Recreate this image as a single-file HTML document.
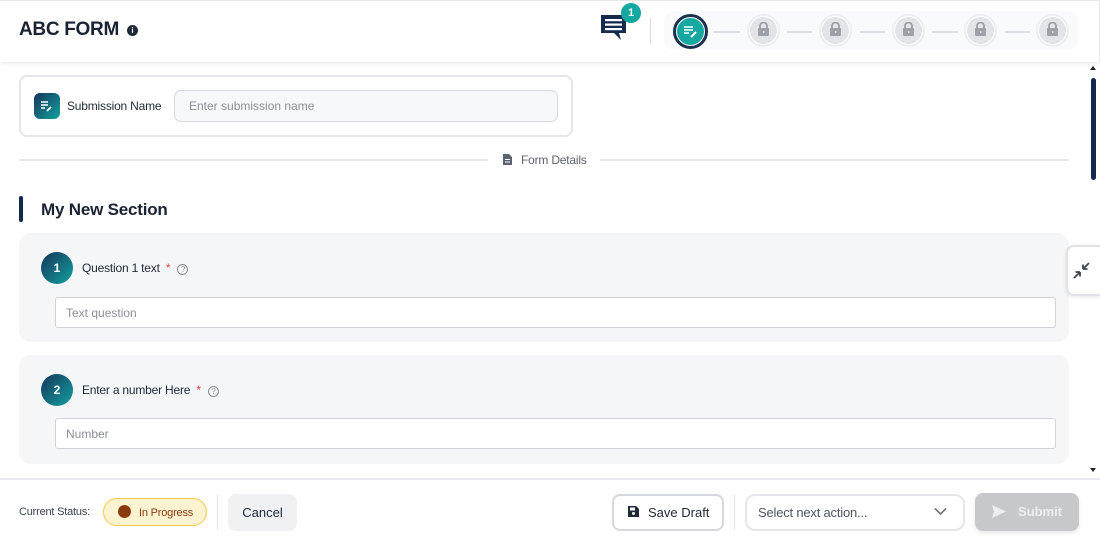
<!DOCTYPE html><html><head><style>
*{box-sizing:border-box;margin:0;padding:0}
body{width:1100px;height:542px;overflow:hidden;background:#fff;font-family:"Liberation Sans",sans-serif;position:relative;color:#1f2937}
.a{position:absolute}
</style></head><body>
<div class="a" style="left:0;top:0;width:1100px;height:62px;border-top:1px solid #e5e7eb;border-right:1px solid #e5e7eb;box-shadow:0 2px 4px rgba(0,0,0,.08)"></div>
<div class="a" style="left:19px;top:19px;font-size:19px;font-weight:bold;color:#1a2233;letter-spacing:-.3px">ABC FORM</div>
<div class="a" style="left:127px;top:25px;width:11px;height:11px;border-radius:50%;background:#1e2a3a;color:#fff;font-size:8px;font-weight:bold;text-align:center;line-height:11px">i</div>
<svg class="a" style="left:600px;top:14px" width="28" height="28" viewBox="0 0 28 28"><path d="M1 1h25v18H19l2 7-7-7H1z" fill="#152b4d"/><rect x="5" y="5" width="17" height="2.2" fill="#fff"/><rect x="5" y="9.5" width="17" height="2.2" fill="#fff"/><rect x="5" y="14" width="17" height="2.2" fill="#fff"/></svg>
<div class="a" style="left:621px;top:3px;width:20px;height:20px;border-radius:50%;background:#14a8a0;color:#fff;font-size:11px;font-weight:bold;text-align:center;line-height:20px">1</div>
<div class="a" style="left:650px;top:18px;width:1px;height:26px;background:#d8dbe0"></div>
<div class="a" style="left:664px;top:11px;width:414px;height:39px;border-radius:10px;background:#f9fafb"></div>
<div class="a" style="left:673px;top:14px;width:35px;height:35px;border-radius:50%;border:3px solid #1c3050;background:#fff"></div>
<div class="a" style="left:677px;top:18px;width:27px;height:27px;border-radius:50%;background:#14a8a0"></div>
<svg class="a" style="left:682px;top:23px" width="17" height="17" viewBox="0 0 17 17"><path d="M2 4h9M2 7h9M2 10h5" stroke="#fff" stroke-width="1.6"/><path d="M9 14l5-5" stroke="#fff" stroke-width="2"/></svg>
<div id="steps"></div>
<script>
var xs=[763,835,908,980,1052],h='';
xs.forEach(function(x,i){h+='<div class="a" style="left:'+(x-16)+'px;top:14px;width:33px;height:33px;border-radius:50%;border:2px solid #eceef1;background:#fff"></div><div class="a" style="left:'+(x-13)+'px;top:17px;width:27px;height:27px;border-radius:50%;background:#e2e4e8"></div><svg class="a" style="left:'+(x-6)+'px;top:22px" width="13" height="15" viewBox="0 0 13 15"><path d="M3 6V4a3.5 3.5 0 0 1 7 0v2" stroke="#9ca0a8" stroke-width="1.8" fill="none"/><rect x="1" y="6" width="11" height="8" rx="1" fill="#9ca0a8"/><rect x="6" y="9" width="1.4" height="2" fill="#e2e4e8"/></svg>';});
var ls=[[713,740],[787,812],[860,885],[932,958],[1005,1030]];
ls.forEach(function(l){h+='<div class="a" style="left:'+l[0]+'px;top:31px;width:'+(l[1]-l[0])+'px;height:1.5px;background:#dcdfe4"></div>'});
document.getElementById('steps').innerHTML=h;
</script>
<div class="a" style="left:1091px;top:78px;width:5px;height:102px;border-radius:3px;background:#13294b"></div>
<div class="a" style="left:1090px;top:66px;width:0;height:0;border-left:3px solid transparent;border-right:3px solid transparent;border-bottom:4px solid #222"></div>
<div class="a" style="left:1090px;top:468px;width:0;height:0;border-left:3px solid transparent;border-right:3px solid transparent;border-top:4px solid #222"></div>

<div class="a" style="left:19px;top:75px;width:554px;height:62px;border:2px solid #e4e6ea;border-radius:8px"></div>
<div class="a" style="left:34px;top:93px;width:26px;height:26px;border-radius:6px;background:linear-gradient(135deg,#15365a,#14a0a0)"></div>
<svg class="a" style="left:40px;top:99px" width="14" height="14" viewBox="0 0 14 14"><path d="M1 3h7M1 6h7M1 9h4" stroke="#fff" stroke-width="1.4"/><path d="M7 12l4-4" stroke="#fff" stroke-width="1.8"/></svg>
<div class="a" style="left:67px;top:99px;font-size:12px;color:#1f2937;letter-spacing:-.2px">Submission Name</div>
<div class="a" style="left:174px;top:90px;width:384px;height:32px;border:1px solid #d5d8de;border-radius:7px;background:#f7f8fa;font-size:12px;color:#8a8f98;padding:8px 14px">Enter submission name</div>

<div class="a" style="left:19px;top:159px;width:469px;height:1.5px;background:#e4e6ea"></div>
<div class="a" style="left:600px;top:159px;width:469px;height:1.5px;background:#e4e6ea"></div>
<svg class="a" style="left:503px;top:154px" width="9" height="11" viewBox="0 0 9 11"><path d="M0 0h6l3 3v8H0z" fill="#5b6270"/><rect x="2" y="5" width="5" height="1" fill="#fff"/><rect x="2" y="7.5" width="5" height="1" fill="#fff"/></svg>
<div class="a" style="left:521px;top:153px;font-size:12px;color:#5b6270;letter-spacing:-.2px">Form Details</div>

<div class="a" style="left:19px;top:196px;width:4px;height:26px;border-radius:2px;background:#13294b"></div>
<div class="a" style="left:41px;top:200px;font-size:17px;font-weight:bold;color:#1a2233;letter-spacing:-.2px">My New Section</div>

<div class="a" style="left:19px;top:233px;width:1050px;height:109px;border-radius:12px;background:#f5f6f8"></div>
<div class="a" style="left:41px;top:252px;width:32px;height:32px;border-radius:50%;background:linear-gradient(135deg,#15365a,#14a0a0);color:#fff;font-size:12px;font-weight:bold;text-align:center;line-height:32px">1</div>
<div class="a" style="left:82px;top:261px;font-size:12px;color:#1f2937;letter-spacing:-.2px">Question 1 text <span style="color:#e53e3e;margin-left:3px">*</span> <span style="display:inline-block;width:11px;height:11px;border:1px solid #8a8f98;border-radius:50%;font-size:8px;color:#8a8f98;text-align:center;line-height:9px;margin-left:4px">?</span></div>
<div class="a" style="left:55px;top:297px;width:1001px;height:31px;border:1px solid #cfd2d7;border-radius:3px;background:#fff;font-size:12px;color:#8a8f98;padding:8px 10px">Text question</div>

<div class="a" style="left:19px;top:355px;width:1050px;height:109px;border-radius:12px;background:#f5f6f8"></div>
<div class="a" style="left:41px;top:374px;width:32px;height:32px;border-radius:50%;background:linear-gradient(135deg,#15365a,#14a0a0);color:#fff;font-size:12px;font-weight:bold;text-align:center;line-height:32px">2</div>
<div class="a" style="left:82px;top:383px;font-size:12px;color:#1f2937;letter-spacing:-.2px">Enter a number Here <span style="color:#e53e3e;margin-left:3px">*</span> <span style="display:inline-block;width:11px;height:11px;border:1px solid #8a8f98;border-radius:50%;font-size:8px;color:#8a8f98;text-align:center;line-height:9px;margin-left:4px">?</span></div>
<div class="a" style="left:55px;top:418px;width:1001px;height:31px;border:1px solid #cfd2d7;border-radius:3px;background:#fff;font-size:12px;color:#8a8f98;padding:8px 10px">Number</div>

<div class="a" style="left:1066px;top:245px;width:40px;height:51px;border:2px solid #e0e2e6;border-radius:8px;background:#fff;box-shadow:0 1px 3px rgba(0,0,0,.1)"></div>
<svg class="a" style="left:1072px;top:261px" width="19" height="19" viewBox="0 0 19 19"><path d="M2 17l6-6M8 11H3.5M8 11v4.5M17 2l-6 6M11 8h4.5M11 8V3.5" stroke="#3f4654" stroke-width="1.8" fill="none"/></svg>

<div class="a" style="left:0;top:478px;width:1100px;height:64px;border-top:2px solid #e6e8ec;background:#fff"></div>
<div class="a" style="left:19px;top:506px;font-size:11px;color:#374151;letter-spacing:-.2px">Current Status:</div>
<div class="a" style="left:103px;top:498px;width:104px;height:28px;border:1px solid #f2c94c;border-radius:14px;background:#fdf3d0"></div>
<div class="a" style="left:118px;top:505px;width:13px;height:13px;border-radius:50%;background:#8b3a0f"></div>
<div class="a" style="left:139px;top:507px;font-size:11px;color:#8b3a0f;letter-spacing:-.2px">In Progress</div>
<div class="a" style="left:217px;top:495px;width:1px;height:35px;background:#e4e6ea"></div>
<div class="a" style="left:228px;top:494px;width:69px;height:37px;border-radius:8px;background:#f0f1f3;font-size:13px;color:#1f2937;text-align:center;line-height:37px">Cancel</div>
<div class="a" style="left:612px;top:494px;width:112px;height:37px;border:2px solid #d5d8de;border-radius:8px;background:#fff;font-size:13px;color:#1f2937;line-height:33px;padding-left:34px">Save Draft</div>
<svg class="a" style="left:628px;top:506px" width="11" height="11" viewBox="0 0 11 11"><path d="M0 0h8l3 3v8H0z" fill="#1f2937"/><rect x="2" y="1.5" width="5" height="3" fill="#fff"/><circle cx="5.5" cy="7.5" r="1.5" fill="#fff"/></svg>
<div class="a" style="left:734px;top:495px;width:1px;height:35px;background:#e4e6ea"></div>
<div class="a" style="left:745px;top:494px;width:220px;height:37px;border:2px solid #e4e6ea;border-radius:10px;background:#fff;font-size:13px;color:#4b5563;line-height:33px;padding-left:11px;letter-spacing:-.2px">Select next action...</div>
<svg class="a" style="left:934px;top:507px" width="13" height="9" viewBox="0 0 13 9"><path d="M1 1.5l5.5 5.5 5.5-5.5" stroke="#6b7280" stroke-width="1.6" fill="none"/></svg>
<div class="a" style="left:975px;top:493px;width:104px;height:38px;border-radius:8px;background:#c7c8ca;box-shadow:0 2px 4px rgba(0,0,0,.1);font-size:13px;font-weight:bold;color:#eceef0;line-height:38px;padding-left:43px">Submit</div>
<svg class="a" style="left:992px;top:505px" width="14" height="13" viewBox="0 0 14 13"><path d="M0 0l14 6.5L0 13l2-6.5z" fill="#eceef0"/></svg>
</body></html>
